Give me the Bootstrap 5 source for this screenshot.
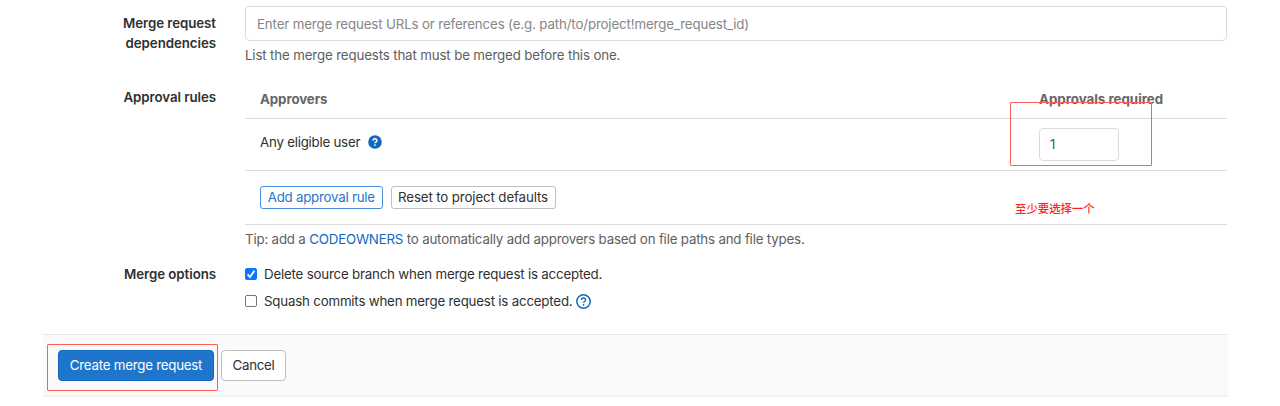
<!DOCTYPE html>
<html lang="en">
<head>
<meta charset="utf-8">
<meta name="viewport" content="width=device-width, initial-scale=1">
<title>New merge request</title>
<link href="https://cdn.jsdelivr.net/npm/bootstrap@5.3.0/dist/css/bootstrap.min.css" rel="stylesheet">
<style>
body{font-family:Inter,"Noto Sans CJK SC",sans-serif;font-size:13.3px;line-height:20px;color:#303030;background:#fff;overflow:hidden}
.mr-form{width:1185px;margin-left:43px;padding-top:6px}
.form-line{display:grid;grid-template-columns:173px 982px;column-gap:29px}
.line-deps{height:74px}
.line-rules{height:177px}
.line-options{height:77px}
.line-label{font-weight:600;text-align:right;padding-top:7px;letter-spacing:-.06px}
.dep-input{height:35px;font-size:13.3px;padding:0 11px;border:1px solid #dbdbdb;border-radius:4px;letter-spacing:-.14px}
.dep-input::placeholder{color:#868686;opacity:1}
.muted{color:#5e5e5e}
.hint{letter-spacing:-.145px}
.tip{letter-spacing:-.184px}
.rule-line{border-bottom:1px solid #dbdbdb;padding-left:15px}
.rule-head{height:39px;color:#666;font-weight:700}
.head-left{letter-spacing:-.1px}
.head-right{letter-spacing:0}
.rule-body{height:52px}
.who{letter-spacing:-.23px;padding-bottom:5px}
.rule-actions{height:54px}
.count-col{width:188px}
.count-input{width:80px;height:33px;font-size:13.3px;padding:0 10px 1px;border:1px solid #dbdbdb;border-radius:4px;color:#555}
.btn{--bs-btn-font-size:13.3px;--bs-btn-padding-y:0;--bs-btn-padding-x:0;--bs-btn-border-radius:4px;line-height:20px;white-space:nowrap}
.btn-small{height:23px;border-radius:3px;padding-bottom:1px}
.btn-plain{color:#303030;border-color:#bfbfbf;background:#fff}
.btn-info-line{width:122.5px;color:#1f75cb;border-color:#428fdc;background:#fff;letter-spacing:-.24px}
.btn-reset{width:165px;letter-spacing:-.125px}
.btn-create{width:156px;color:#fff;background:#1f75cb;border-color:#1068bf;letter-spacing:-.23px}
.btn-cancel{width:65px;letter-spacing:-.27px}
.btn-tall{height:31px;padding-bottom:1px}
.code-link{color:#1068bf}
.opt-line{letter-spacing:-.196px;gap:7px;height:20px}
.opt-list{padding-top:7px;gap:7px}
.form-check-input.opt-check{width:12px;height:12px;margin:0;border:1px solid #767676;border-radius:2px;flex:none}
.form-check-input.opt-check:checked{background-color:#0b76ff;border-color:#0b76ff;background-image:none}
.tick svg{position:absolute;left:0;top:0}
.help-ring{margin-left:-3px}
.form-foot{height:63px;background:#fafafa;border-top:1px solid #e8e8e8;border-bottom:2px solid #f2f2f2;padding:15px 15px 0;gap:7px}
.marker{position:absolute;border:1px solid #ff5c5c;border-radius:1px;pointer-events:none}
.marker-count{left:-29px;top:-26px;width:142px;height:64px}
.marker-create{left:-11px;top:-6px;width:171px;height:47px}
.note{position:absolute;left:-24px;top:28px;font-size:11.4px;font-weight:500;color:#ff1f1f;white-space:nowrap}
</style>
</head>
<body>
<form class="mr-form">
  <div class="form-line line-deps">
    <div class="line-label">Merge request<br>dependencies</div>
    <div>
      <input class="form-control dep-input" type="text" placeholder="Enter merge request URLs or references (e.g. path/to/project!merge_request_id)">
      <div class="muted hint pt-1">List the merge requests that must be merged before this one.</div>
    </div>
  </div>
  <div class="form-line line-rules">
    <div class="line-label">Approval rules</div>
    <div>
      <div class="rule-line rule-head d-flex align-items-center">
        <div class="flex-grow-1 head-left">Approvers</div>
        <div class="count-col head-right">Approvals required</div>
      </div>
      <div class="rule-line rule-body d-flex align-items-center">
        <div class="flex-grow-1 d-flex align-items-center gap-2 who"><span>Any eligible user</span>
          <svg width="14" height="14" viewBox="0 0 14 14"><circle cx="7" cy="7" r="6.8" fill="#1068bf"/><path d="M5.1 5.6a1.9 1.7 0 1 1 2.8 1.4Q7 7.4 7 8.2" fill="none" stroke="#fff" stroke-width="1.5"/><circle cx="7" cy="10.1" r=".95" fill="#fff"/></svg>
        </div>
        <div class="count-col position-relative"><input class="form-control count-input" type="text" value="1"><div class="marker marker-count"></div></div>
      </div>
      <div class="rule-line rule-actions d-flex align-items-center">
        <div class="flex-grow-1 d-flex gap-2">
          <button type="button" class="btn btn-small btn-info-line">Add approval rule</button>
          <button type="button" class="btn btn-small btn-plain btn-reset">Reset to project defaults</button>
        </div>
        <div class="count-col position-relative align-self-stretch"><span class="note">至少要选择一个</span></div>
      </div>
      <div class="muted tip pt-1">Tip: add a <a class="code-link text-decoration-none" href="#">CODEOWNERS</a> to automatically add approvers based on file paths and file types.</div>
    </div>
  </div>
  <div class="form-line line-options">
    <div class="line-label">Merge options</div>
    <div class="d-flex flex-column opt-list">
      <label class="d-flex align-items-center opt-line">
        <span class="tick position-relative d-flex"><input type="checkbox" class="form-check-input opt-check" checked><svg width="12" height="12" viewBox="0 0 12 12"><path d="M2.6 6.3 5 9 9.4 2.8" fill="none" stroke="#fff" stroke-width="1.9"/></svg></span>
        <span>Delete source branch when merge request is accepted.</span>
      </label>
      <label class="d-flex align-items-center opt-line">
        <input type="checkbox" class="form-check-input opt-check">
        <span>Squash commits when merge request is accepted.</span>
        <svg class="help-ring" width="15" height="15" viewBox="0 0 15 15"><circle cx="7.5" cy="7.5" r="6.7" fill="none" stroke="#1068bf" stroke-width="1.5"/><path d="M5.4 6a2.1 1.9 0 1 1 3.1 1.6q-1 .4-1 1.2" fill="none" stroke="#1068bf" stroke-width="1.4"/><circle cx="7.5" cy="10.8" r=".9" fill="#1068bf"/></svg>
      </label>
    </div>
  </div>
  <div class="form-foot d-flex align-items-start">
    <div class="position-relative"><button type="button" class="btn btn-tall btn-create">Create merge request</button><div class="marker marker-create"></div></div>
    <button type="button" class="btn btn-tall btn-plain btn-cancel">Cancel</button>
  </div>
</form>
<script src="https://cdn.jsdelivr.net/npm/bootstrap@5.3.0/dist/js/bootstrap.bundle.min.js"></script>
</body>
</html>
